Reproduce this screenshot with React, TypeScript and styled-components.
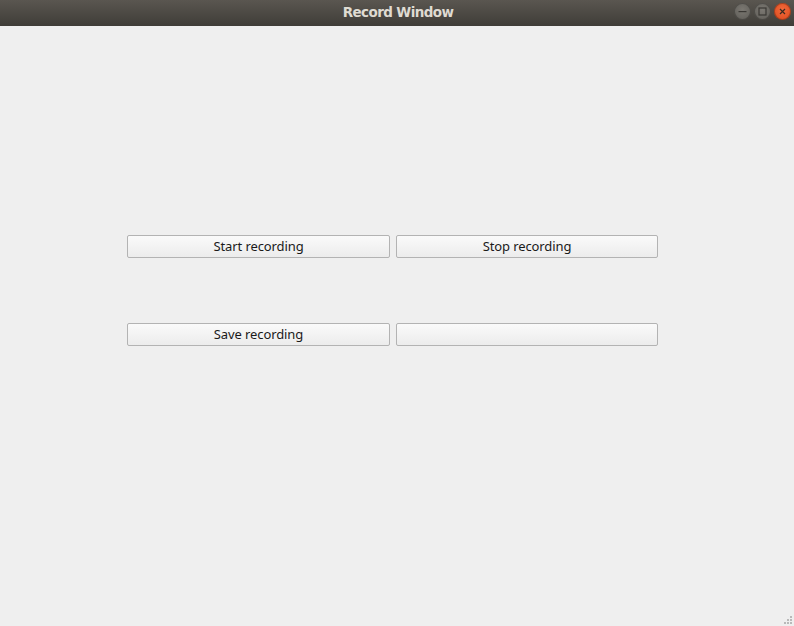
import React from "react";
import styled, { createGlobalStyle } from "styled-components";

const Global = createGlobalStyle`
  html, body { margin: 0; padding: 0; background: #efefef; }
  body { font-family: "Noto Sans", "DejaVu Sans", sans-serif; }
`;

const Window = styled.div`
  width: 794px;
  height: 626px;
  display: flex;
  flex-direction: column;
  background: #efefef;
  position: relative;
  overflow: hidden;
`;

const TitleBar = styled.div`
  height: 26px;
  flex: none;
  background: linear-gradient(#5a5650, #3f3d38);
  display: flex;
  align-items: center;
  justify-content: center;
  position: relative;
`;

const Title = styled.div`
  color: #dfdbd2;
  font-family: "DejaVu Sans", sans-serif;
  font-weight: bold;
  font-size: 13.5px;
  letter-spacing: -0.6px;
  padding-bottom: 3px;
  margin-left: 2px;
`;

const Controls = styled.div`
  position: absolute;
  right: 3px;
  top: 3px;
  display: flex;
  gap: 3px;
`;

const Ctrl = styled.div<{ $close?: boolean }>`
  width: 17px;
  height: 17px;
  border-radius: 50%;
  background: ${(p) =>
    p.$close
      ? "radial-gradient(circle at 50% 40%, #f26a3c, #d9471a)"
      : "radial-gradient(circle at 50% 40%, #7b7872, #5c5a55)"};
  box-shadow: inset 0 0 0 1px rgba(0,0,0,0.25);
  display: flex;
  align-items: center;
  justify-content: center;
`;

const Content = styled.div`
  flex: 1;
  padding: 209px 136px 0 127px;
  display: grid;
  grid-template-columns: 263px 262px;
  grid-auto-rows: 23px;
  column-gap: 6px;
  row-gap: 65px;
  align-content: start;
`;

const Button = styled.button`
  height: 23px;
  margin: 0;
  padding: 0;
  border: 1px solid #b3b3b3;
  border-radius: 2px;
  background: linear-gradient(#fafafa, #ececec);
  color: #1a1a1a;
  font-family: "Noto Sans", "DejaVu Sans", sans-serif;
  font-size: 13px;
  letter-spacing: -0.1px;
  line-height: 21px;
  text-align: center;
`;

const Grip = styled.svg`
  position: absolute;
  right: 1px;
  bottom: 1px;
`;

export default function App() {
  return (
    <>
      <Global />
      <Window>
        <TitleBar>
          <Title>Record Window</Title>
          <Controls>
            <Ctrl>
              <svg width="9" height="9" viewBox="0 0 9 9">
                <rect x="0.5" y="4" width="8" height="1.2" fill="#3a3834" />
              </svg>
            </Ctrl>
            <Ctrl>
              <svg width="9" height="9" viewBox="0 0 9 9">
                <rect x="1" y="1" width="7" height="7" fill="none" stroke="#3a3834" strokeWidth="1.2" />
              </svg>
            </Ctrl>
            <Ctrl $close>
              <svg width="9" height="9" viewBox="0 0 9 9">
                <path d="M2 2 L7 7 M7 2 L2 7" stroke="#3a2a20" strokeWidth="1.2" />
              </svg>
            </Ctrl>
          </Controls>
        </TitleBar>
        <Content>
          <Button>Start recording</Button>
          <Button>Stop recording</Button>
          <Button>Save recording</Button>
          <Button></Button>
        </Content>
        <Grip width="10" height="10" viewBox="0 0 10 10">
          {[
            [8, 2],
            [5, 5],
            [8, 5],
            [2, 8],
            [5, 8],
            [8, 8],
          ].map(([x, y], i) => (
            <rect key={i} x={x - 1} y={y - 1} width="2" height="2" fill="#b9b9b9" />
          ))}
        </Grip>
      </Window>
    </>
  );
}
